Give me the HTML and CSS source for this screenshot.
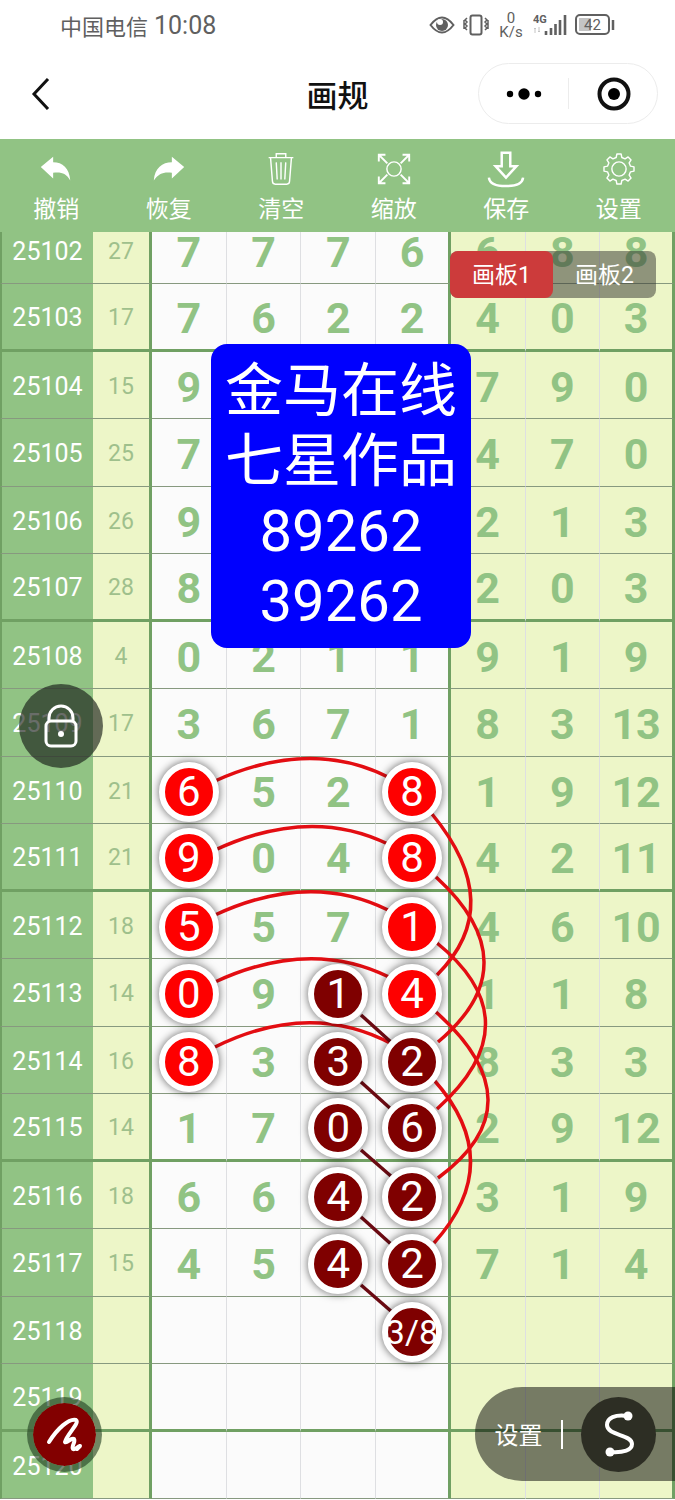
FILE: index.html
```html
<!DOCTYPE html>
<html lang="zh-CN">
<head>
  <meta charset="UTF-8" />
  <meta name="viewport" content="width=device-width, initial-scale=1" />
  <title>画规</title>
  <link rel="stylesheet" href="styles.css">
</head>
<body>
  <div class="status-bar">
    <div class="carrier"><span>中国电信</span><span class="time">10:08</span></div>
    <div class="status-icons">
      <svg width="26" height="18" viewBox="0 0 26 18"><path d="M1.500 9Q13-6 24.500 9Q13 24 1.500 9Z" fill="none" stroke="#606060" stroke-width="2"/><circle cx="13" cy="9" r="6" fill="#606060"/><circle cx="11" cy="6" r="3" fill="#fff"/></svg>
      <svg width="26" height="22" viewBox="0 0 26 22" fill="none" stroke="#606060"><rect x="7.500" y="1.500" width="11" height="19" rx="2" stroke-width="2"/><path d="M4 4l-2 2 2 2-2 2 2 2-2 2 2 2M1 6v9M22 4l2 2-2 2 2 2-2 2 2 2-2 2M25 6v9" stroke-width="1.500"/></svg>
      <div class="speed"><span>0</span><span>K/s</span></div>
      <svg width="34" height="24" viewBox="0 0 34 24"><text x="0" y="10" class="net">4G</text><path d="M2 15v5M1 16l1-1 1 1M6 14v5M5 18l1 1 1-1" stroke="#c4c4c4" fill="none"/><path d="M13 18v4M18 15v7M22.500 11v11M27 7v15M32 2v20" stroke="#606060" stroke-width="2.600"/></svg>
      <svg width="40" height="22" viewBox="0 0 40 22"><rect x="1" y="1" width="33" height="19" rx="4" fill="none" stroke="#606060" stroke-width="2"/><rect x="4" y="4" width="12" height="13" fill="#c4c4c4"/><path d="M38 6v10" stroke="#606060" stroke-width="2.500"/><text x="17.500" y="16" class="battery" text-anchor="middle">42</text></svg>
    </div>
  </div>

  <header class="nav">
    <button class="back" aria-label="返回"><svg width="22" height="32" viewBox="0 0 22 32"><path d="M18 1L4 16l14 15" fill="none" stroke="#111" stroke-width="3"/></svg></button>
    <h1>画规</h1>
    <div class="capsule">
      <button aria-label="更多"><svg width="38" height="14" viewBox="0 0 38 14"><circle cx="5" cy="7" r="3.200"/><circle cx="19" cy="7" r="5.700"/><circle cx="33" cy="7" r="3.200"/></svg></button>
      <button aria-label="关闭"><svg width="34" height="34" viewBox="0 0 34 34"><circle cx="17" cy="17" r="14.500" fill="none" stroke="#111" stroke-width="4"/><circle cx="17" cy="17" r="6"/></svg></button>
    </div>
  </header>

  <div class="toolbar">
    <button><svg viewBox="0 0 40 40"><path d="M4 18L17 7v6c10 0 17 6 18 19-4-7-9-9-18-8v6z" fill="#fff"/></svg><span>撤销</span></button>
    <button><svg viewBox="0 0 40 40"><path d="M36 18L23 7v6C13 13 5 19 4 32c5-7 10-9 19-8v6z" fill="#fff"/></svg><span>恢复</span></button>
    <button><svg viewBox="0 0 40 40"><path d="M7 8h26M15 8V4h10v4M9 8l2 25q0 3 3 3h12q3 0 3-3l2-25M15 13l1 18M20 13v18M25 13l-1 18"/></svg><span>清空</span></button>
    <button><svg viewBox="0 0 40 40"><circle cx="20" cy="20" r="7.500"/><path d="M4 12V5h7M4 5l9 9M29 5h7v7M36 5l-9 9M4 28v7h7M4 35l9-9M36 28v7h-7M36 35l-9-9" stroke-width="2"/></svg><span>缩放</span></button>
    <button><svg viewBox="0 0 40 40"><path d="M15.500 3h9v14H31L20 29 9 17h6.500zM2 29q1 9 18 9t18-9" stroke-width="2.600"/></svg><span>保存</span></button>
    <button><svg viewBox="0 0 40 40"><g transform="translate(20 20)"><circle r="7.500"/><path d="M-3-12.100L-2.200-15.800 2.200-15.800 3-12.100 6.400-10.700 9.600-12.700 12.700-9.600 10.700-6.400 12.100-3 15.800-2.200 15.800 2.200 12.100 3 10.700 6.400 12.700 9.600 9.600 12.700 6.400 10.700 3 12.100 2.200 15.800-2.200 15.800-3 12.100-6.400 10.700-9.600 12.700-12.700 9.600-10.700 6.400-12.100 3-15.800 2.200-15.800-2.200-12.100-3-10.700-6.400-12.700-9.600-9.600-12.700-6.400-10.700z" stroke-linejoin="round"/></g></svg><span>设置</span></button>
  </div>

  <main class="board">
    <table class="trend">
      <colgroup><col class="col-issue"><col class="col-sum"><col span="7"></colgroup>
      <tbody id="rows"></tbody>
    </table>

    <svg class="lines" viewBox="152 217 523 1282" preserveAspectRatio="none">
      <g stroke="#e30d12">
        <path d="M215 781Q310 738 388 777"/>
        <path d="M215 850Q310 806 388 844"/>
        <path d="M215 915Q310 871 388 910"/>
        <path d="M215 982Q310 938 389 977"/>
        <path d="M215 1047Q310 1000 392 1044"/>
        <path d="M432 814Q507 905 437 975"/>
        <path d="M436 877Q531 964 438 1042"/>
        <path d="M437 943Q534 1022 437 1109"/>
        <path d="M436 1012Q539 1104 438 1178"/>
        <path d="M434 1080Q507 1162 434 1243"/>
      </g>
      <g stroke="#6b0a12">
        <path d="M361 1015L392 1043"/>
        <path d="M361 1082L392 1110"/>
        <path d="M361 1150L392 1177"/>
        <path d="M361 1217L392 1245"/>
        <path d="M361 1285L392 1312"/>
      </g>
    </svg>

    <div class="note">金马在线<br>七星作品<br>89262<br>39262</div>

    <div class="tabs">
      <button class="active">画板1</button>
      <button>画板2</button>
    </div>

    <button class="lock" aria-label="锁定"><svg width="36" height="46" viewBox="0 0 36 46" fill="none" stroke="#fff" stroke-width="3"><rect x="3" y="18" width="30" height="25" rx="5"/><path d="M6 18v-3a12 12 0 0 1 24 0v3"/><circle cx="18" cy="31" r="3" fill="#fff" stroke="none"/></svg></button>

    <button class="brush" aria-label="画笔"><svg width="40" height="40" viewBox="0 0 40 40"><path d="M4 27C12 14 24 3 31 5c4 3-9 14-11 22 2 2 6-5 9-3 2 3-3 7-1 10 2 1 4-2 7-3l-3 3" fill="none" stroke="#fff" stroke-width="4" stroke-linecap="round" stroke-linejoin="round"/></svg></button>

    <div class="dock">
      <button class="dock-set">设置</button>
      <button class="curve" aria-label="曲线"><svg width="32" height="48" viewBox="0 0 32 48"><path d="M25 6C12 4 4 8 4 15c0 11 25 9 25 19 0 6-8 9-22 8" fill="none" stroke="#fff" stroke-width="4"/><circle cx="25" cy="6" r="4.500" fill="#fff"/><circle cx="7" cy="42" r="4.500" fill="#fff"/></svg></button>
    </div>
  </main>

  <script>
    // r = red ball, d = dark ball, - = empty
    const data = [
      [25102, 27, '7 7 7 6 6 8 8'],
      [25103, 17, '7 6 2 2 4 0 3'],
      [25104, 15, '9 - - - 7 9 0'],
      [25105, 25, '7 - - - 4 7 0'],
      [25106, 26, '9 - - - 2 1 3'],
      [25107, 28, '8 - - - 2 0 3'],
      [25108, 4, '0 2 1 1 9 1 9'],
      [25109, 17, '3 6 7 1 8 3 13'],
      [25110, 21, 'r6 5 2 r8 1 9 12'],
      [25111, 21, 'r9 0 4 r8 4 2 11'],
      [25112, 18, 'r5 5 7 r1 4 6 10'],
      [25113, 14, 'r0 9 d1 r4 1 1 8'],
      [25114, 16, 'r8 3 d3 d2 8 3 3'],
      [25115, 14, '1 7 d0 d6 2 9 12'],
      [25116, 18, '6 6 d4 d2 3 1 9'],
      [25117, 15, '4 5 d4 d2 7 1 4'],
      [25118, '', '- - - d3/8 - - -'],
      [25119, '', '- - - - - - -'],
      [25120, '', '- - - - - - -']
    ];

    function cell(v, i) {
      const cls = i < 4 ? 'main' : 'extra';
      let text = v === '-' ? '' : v;
      if (v[0] === 'r' || v[0] === 'd') {
        const num = v.slice(1);
        text = `<span class="ball ${v[0] === 'r' ? 'red' : 'dark'}${num.length > 1 ? ' small' : ''}">${num}</span>`;
      }
      return `<td class="${cls}">${text}</td>`;
    }

    document.getElementById('rows').innerHTML = data.map(([issue, sum, nums]) =>
      `<tr><th scope="row">${issue}</th><td class="sum">${sum}</td>${nums.split(' ').map(cell).join('')}</tr>`
    ).join('');
  </script>
</body>
</html>
```
FILE: styles.css
```css
* {
  box-sizing: border-box;
}
body {
  margin: 0;
  background: #fff;
  font-family: Roboto, "Noto Sans CJK SC", sans-serif;
  color: #111;
}
button {
  border: none;
  padding: 0;
  background: none;
  font-family: inherit;
  color: inherit;
  cursor: pointer;
}
svg {
  display: block;
}

/* phone status bar */
.status-bar {
  display: flex;
  justify-content: space-between;
  align-items: center;
  height: 50px;
  padding: 0 60px;
  color: #606060;
}
.carrier {
  display: flex;
  align-items: center;
  gap: 6px;
  font-size: 22px;
}
.time {
  font-size: 25px;
}
.status-icons {
  display: flex;
  align-items: center;
  gap: 8px;
  height: 48px;
}
.speed {
  display: flex;
  flex-direction: column;
  align-items: center;
  width: 28px;
  font-size: 15px;
  line-height: 14px;
}
.net {
  font-size: 11px;
  font-weight: bold;
  fill: #606060;
}
.battery {
  font-size: 15px;
  fill: #606060;
}

/* title bar */
.nav {
  display: flex;
  align-items: center;
  justify-content: space-between;
  position: relative;
  height: 89px;
  padding: 0 17px 2px 30px;
}
.nav h1 {
  position: absolute;
  left: 0;
  right: 0;
  margin: 0;
  text-align: center;
  font-size: 31px;
  font-weight: 500;
  pointer-events: none;
}
.capsule {
  display: flex;
  width: 180px;
  height: 61px;
  border: 1px solid #ececec;
  border-radius: 31px;
}
.capsule button {
  flex: 1;
  display: flex;
  align-items: center;
  justify-content: center;
}
.capsule button + button::before {
  content: "";
  width: 1px;
  height: 31px;
  margin-right: 28px;
  background: #ececec;
}
.capsule button + button {
  justify-content: flex-start;
}

/* tools */
.toolbar {
  display: flex;
  height: 93px;
  padding-top: 11px;
  background: #91c384;
}
.toolbar button {
  flex: 1;
  display: flex;
  flex-direction: column;
  align-items: center;
  gap: 5px;
  color: #fff;
  font-size: 23px;
  line-height: 34px;
}
.toolbar svg {
  width: 38px;
  height: 38px;
  fill: none;
  stroke: #fff;
  stroke-width: 1.5;
}
.toolbar path[fill] {
  stroke: none;
}

/* trend table, scrolled a little under the toolbar */
.board {
  position: relative;
  overflow: hidden;
}
.trend {
  width: 100%;
  margin-top: -15px;
  table-layout: fixed;
  border-collapse: separate;
  border-spacing: 0;
  text-align: center;
}
.col-issue {
  width: 93px;
}
.col-sum {
  width: 59px;
}
.trend th,
.trend td {
  height: 68px;
  padding: 3px 0 0;
  line-height: 60px;
  border-bottom: 1px solid #87997f;
}
.trend tr:nth-child(odd) th,
.trend tr:nth-child(odd) td {
  height: 67px;
}
.trend tr:nth-child(4n + 2) th,
.trend tr:nth-child(4n + 2) td {
  border-bottom: 3px solid #70a063;
}
.trend th {
  background: #91c384;
  border-left: 2px solid #70a063;
  color: #fff;
  font-size: 25px;
  font-weight: normal;
}
.trend .sum {
  background: #edf6c8;
  border-right: 3px solid #70a063;
  color: #9fc08c;
  font-size: 23px;
}
.trend .main,
.trend .extra {
  border-right: 1px solid #dedfe2;
  color: #91c384;
  font-size: 43px;
  font-weight: bold;
}
.trend .main {
  background: #fbfbfb;
}
.trend .extra {
  background: #edf6c8;
}
.trend td:nth-child(6),
.trend td:last-child {
  border-right: 3px solid #70a063;
}

.ball {
  display: block;
  position: relative;
  z-index: 2;
  width: 60px;
  height: 60px;
  margin: 0 auto;
  border: 6px solid #fff;
  border-radius: 50%;
  box-shadow: 0 0 8px rgba(0, 0, 0, 0.6);
  color: #fff;
  font-size: 42px;
  font-weight: normal;
  line-height: 48px;
}
.red {
  background: #fe0000;
}
.dark {
  background: #7f0000;
}
.small {
  font-size: 34px;
  display: flex;
  justify-content: center;
}
.lines {
  position: absolute;
  top: -15px;
  left: 152px;
  z-index: 1;
  width: calc(100% - 152px);
  height: 1282px;
  fill: none;
  stroke-width: 3.5;
}

.note {
  position: absolute;
  top: 112px;
  left: 211px;
  z-index: 3;
  padding: 12px 14px;
  border-radius: 16px;
  background: #0000fe;
  color: #fff;
  font-size: 58px;
  line-height: 70px;
  text-align: center;
}

.tabs {
  position: absolute;
  top: 19px;
  right: 19px;
  z-index: 3;
  display: flex;
  border-radius: 8px;
  background: rgba(50, 50, 45, 0.5);
}
.tabs button {
  width: 103px;
  height: 47px;
  padding-bottom: 4px;
  border-radius: 8px;
  color: #fff;
  font-size: 23px;
}
.tabs .active {
  background: #cc3b3b;
}

.lock,
.brush {
  position: absolute;
  z-index: 3;
  display: flex;
  align-items: center;
  justify-content: center;
  border-radius: 50%;
}
.lock {
  top: 452px;
  left: 19px;
  width: 84px;
  height: 84px;
  background: rgba(25, 30, 25, 0.65);
}
.brush {
  bottom: 27px;
  left: 27px;
  width: 75px;
  height: 75px;
  border: 6px solid rgba(30, 60, 30, 0.6);
  background: #820000;
  background-clip: padding-box;
}

.dock {
  position: absolute;
  right: 0;
  bottom: 18px;
  z-index: 3;
  display: flex;
  align-items: center;
  width: 200px;
  height: 94px;
  padding-left: 19px;
  border-radius: 47px 0 0 47px;
  background: rgba(0, 0, 0, 0.5);
}
.dock-set {
  width: 69px;
  height: 29px;
  padding: 4px 18px 0 0;
  border-right: 2px solid #fff;
  color: #fff;
  font-size: 24px;
  line-height: 25px;
  white-space: nowrap;
}
.curve {
  display: flex;
  align-items: center;
  justify-content: center;
  width: 75px;
  height: 75px;
  margin-left: 18px;
  border-radius: 50%;
  background: #2d2e24;
}
```
